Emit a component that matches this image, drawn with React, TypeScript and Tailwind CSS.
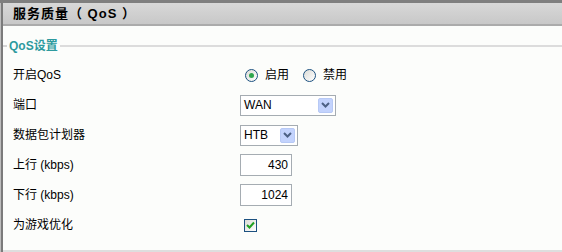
import { useState } from "react";

const font = { fontFamily: '"Liberation Sans", "Noto Sans CJK SC", sans-serif' };

function Row({ label, children }: { label: string; children: React.ReactNode }) {
  return (
    <div className="flex items-center h-[30px]">
      <div className="w-[237px] pl-[10px] text-[12px] text-black">{label}</div>
      <div className="flex items-center">{children}</div>
    </div>
  );
}

function Select({ value, width }: { value: string; width: string }) {
  return (
    <div className={`flex items-center justify-between h-[21px] border border-[#a5acb2] bg-white pl-[3px] pr-[2px] ${width}`}>
      <span className="text-[12px] text-black">{value}</span>
      <span className="flex items-center justify-center w-[15px] h-[15px] rounded-[2px] bg-[#c3d3fd] border border-[#b7c9f5]">
        <svg width="9" height="6" viewBox="0 0 9 6">
          <path d="M1 1 L4.5 4.5 L8 1" fill="none" stroke="#4d6185" strokeWidth="2" />
        </svg>
      </span>
    </div>
  );
}

function Radio({ checked }: { checked: boolean }) {
  return (
    <span className="flex items-center justify-center w-[13px] h-[13px] rounded-full border border-[#1c5180] bg-gradient-to-br from-[#dcdcd7] to-white">
      {checked && <span className="w-[5px] h-[5px] rounded-full bg-[#2fa64d]" />}
    </span>
  );
}

export default function App() {
  const [mode, setMode] = useState("on");
  const [game, setGame] = useState(true);

  return (
    <div className="w-[562px] h-[252px] bg-[#fcfdfb] overflow-hidden" style={font}>
      <div className="h-[3px] bg-[#7f7f7f]" />
      <div className="flex h-[249px]">
        <div className="w-[3px] bg-[#7b7b7b] border-l border-[#bdbdbd]" />
        <div className="flex-1 flex flex-col">
          {/* Titre */}
          <div className="h-[23px] flex items-center pl-[10px] bg-gradient-to-b from-[#d8d8d8] to-[#c8c8c8] border-b-2 border-[#ababab]">
            <span className="text-[13px] font-bold text-black tracking-[1px]">服务质量（ QoS ）</span>
          </div>

          {/* Fieldset */}
          <div className="flex-1 flex flex-col border-b-2 border-[#dedede]">
            <div className="flex items-center mt-[12px] h-[16px]">
              <div className="w-[4px] h-[2px] bg-[#d5d5d5]" />
              <span className="px-[2px] text-[12px] font-bold text-[#2d9a9e]">QoS设置</span>
              <div className="flex-1 h-[2px] bg-[#dcdcdc]" />
            </div>
            <div className="flex flex-col mt-[6px]">
              <Row label="开启QoS">
                <label className="flex items-center gap-[7px] ml-[5px] cursor-pointer" onClick={() => setMode("on")}>
                  <Radio checked={mode === "on"} />
                  <span className="text-[12px]">启用</span>
                </label>
                <label className="flex items-center gap-[7px] ml-[14px] cursor-pointer" onClick={() => setMode("off")}>
                  <Radio checked={mode === "off"} />
                  <span className="text-[12px]">禁用</span>
                </label>
              </Row>
              <Row label="端口">
                <Select value="WAN" width="w-[96px]" />
              </Row>
              <Row label="数据包计划器">
                <Select value="HTB" width="w-[58px]" />
              </Row>
              <Row label="上行 (kbps)">
                <div className="w-[52px] h-[22px] border border-[#a5acb2] bg-white text-right pr-[3px] text-[12px] leading-[20px]">430</div>
              </Row>
              <Row label="下行 (kbps)">
                <div className="w-[52px] h-[22px] border border-[#a5acb2] bg-white text-right pr-[3px] text-[12px] leading-[20px]">1024</div>
              </Row>
              <Row label="为游戏优化">
                <span
                  className="ml-[4px] flex items-center justify-center w-[13px] h-[13px] border border-[#1c5180] bg-gradient-to-br from-[#dcdcd7] to-white cursor-pointer"
                  onClick={() => setGame(!game)}
                >
                  {game && (
                    <svg width="9" height="8" viewBox="0 0 9 8">
                      <path d="M1 4 L3.5 6.5 L8 1.5" fill="none" stroke="#21a121" strokeWidth="2" />
                    </svg>
                  )}
                </span>
              </Row>
            </div>
          </div>
        </div>
      </div>
    </div>
  );
}
